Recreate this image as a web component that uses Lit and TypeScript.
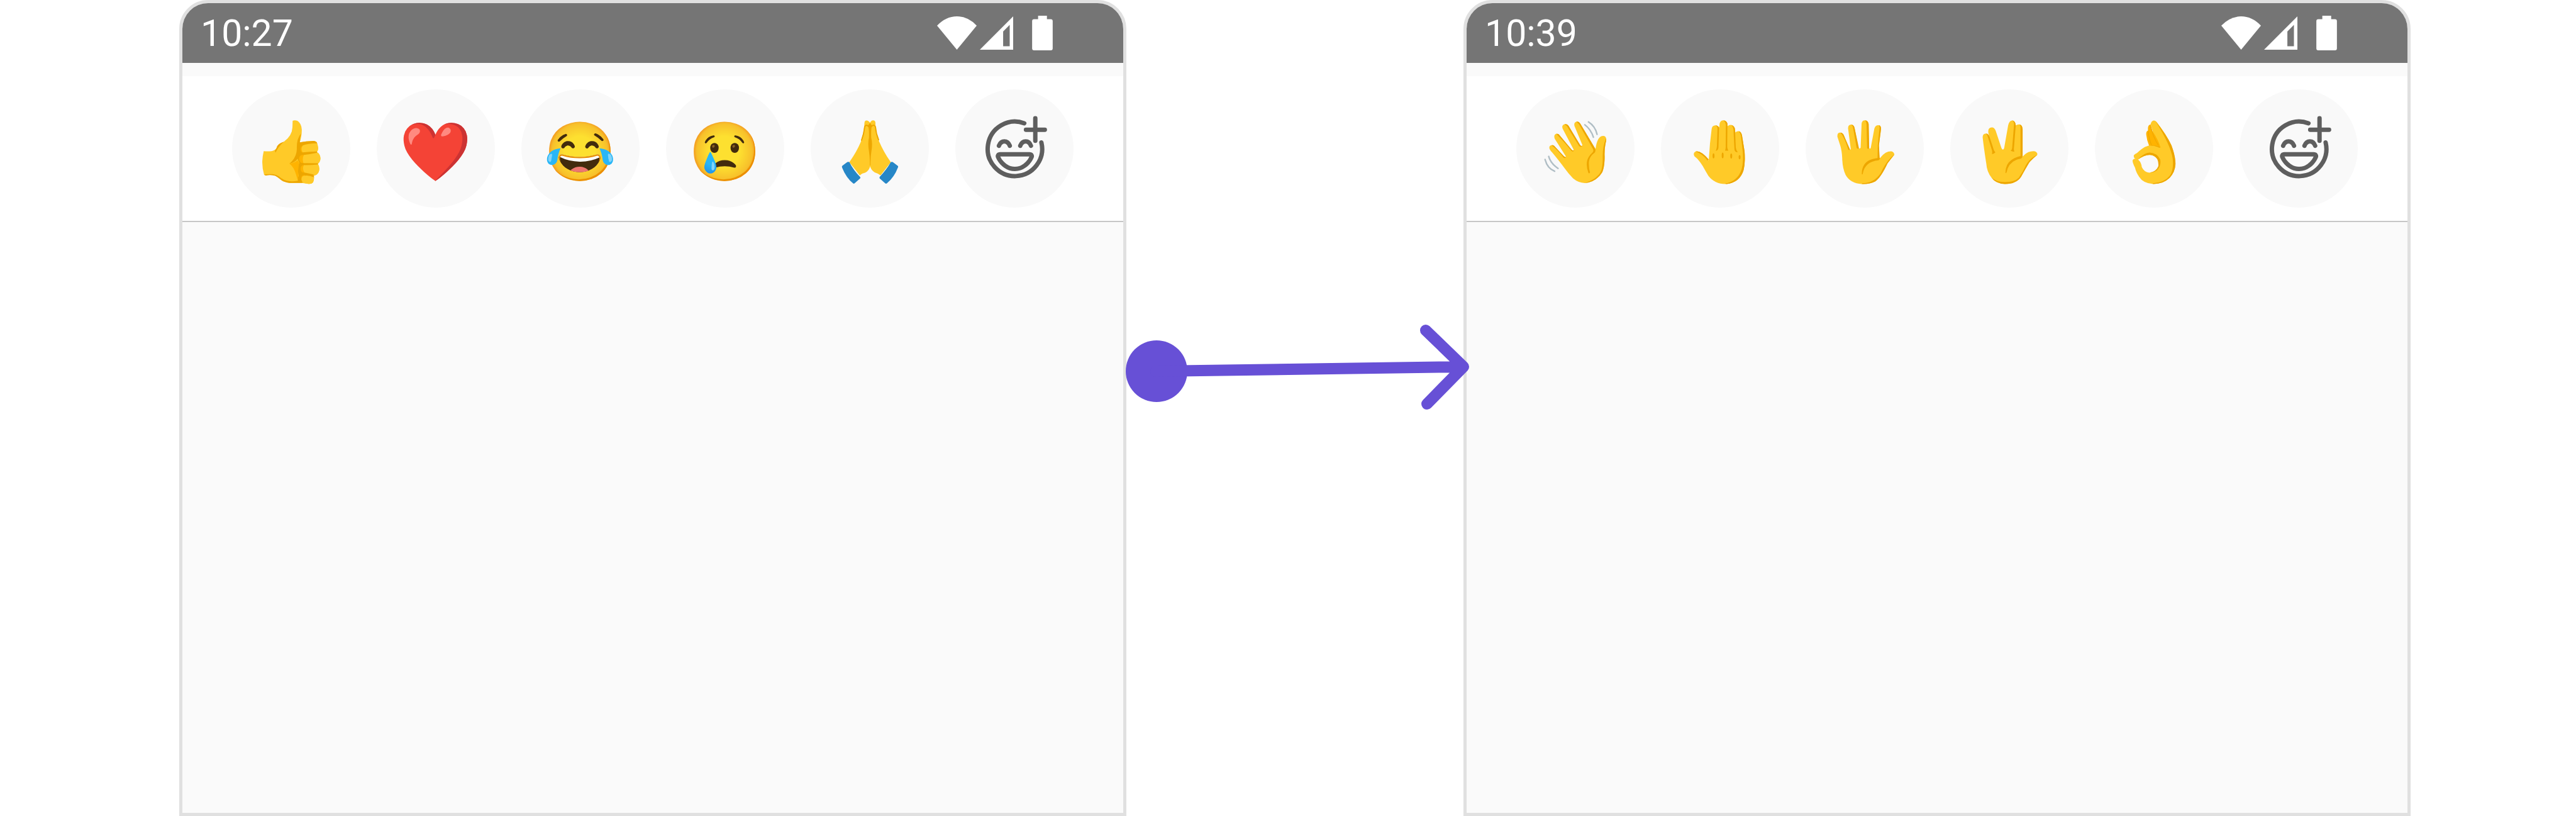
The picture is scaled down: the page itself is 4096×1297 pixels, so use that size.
import { LitElement, html, svg, css, type SVGTemplateResult } from "lit";
import { customElement, property } from "lit/decorators.js";

interface Reaction {
  label: string;
  glyph?: string;
  art?: SVGTemplateResult;
  box?: string;
}

const thumbsUp = svg`
  <path class="skin" d="M331 181Q341 175 356 181Q377 194 379 226Q380 255 369 294Q410 287 446 288Q460 291 465 322Q466 335 459 345Q476 353 477 378Q477 398 464 407Q473 420 471 438Q468 460 451 467L443 470Q446 485 438 505Q430 514 414 512Q395 510 380 507H315Q290 504 272 492Q255 477 240 469Q220 464 200 466Q185 470 181 464Q163 405 179 340Q200 342 220 340Q238 337 246 325Q252 302 285 291Q328 260 330 215Z"/>
  <path class="shade" d="M375 248Q368 275 369 294Q400 288 440 287Q457 287 460 299L459 345 464 407 441 465 443 478 384 505 380 507H315Q290 505 272 493Q255 478 240 470Q215 465 200 467Q185 471 183 463Q200 460 225 461Q245 463 258 473Q285 497 315 498Q345 500 359 496Q355 480 363 470Q358 455 360 430Q360 410 366 402Q360 390 357 380Q345 400 314 406Q352 375 353 330Q351 275 375 248ZM285 291Q248 302 246 325L238 338 241 349Q254 318 285 291Z"/>
  <path class="deep" d="M357 388Q342 402 314 406Q338 425 348 460L358 494Q356 480 362 470Q358 450 361 430Q361 412 366 402Q360 396 357 388Z"/>
  <path class="deep" d="M395 308Q375 312 373 325Q371 342 380 347L400 345ZM390 360Q366 358 365 378Q366 398 378 402L400 403ZM395 413Q375 412 373 430Q373 448 384 453L400 453ZM395 466Q377 466 376 480Q377 494 386 500L405 503Z"/>
  <path class="skin" d="M384 311Q410 299 459 299Q465 310 465 325Q465 338 457 342Q420 343 384 347Q372 330 384 311ZM390 360Q425 357 460 349Q476 356 477 378Q476 398 464 404Q425 403 388 403Q380 380 390 360ZM390 414Q430 414 464 411Q472 420 471 438Q468 460 451 466Q420 458 393 453Q380 433 390 414ZM384 472Q410 463 441 477Q446 490 438 505Q430 514 414 512Q395 510 382 502Q371 487 384 472Z"/>`;

const foldedHands = svg`
  <path class="skin" d="M356 192Q346 176 332 180Q325 184 326 200Q320 255 308 290Q285 345 247 398L302 468Q312 457 330 454Q352 442 356 420Q361 440 380 452Q398 457 411 468L465 398Q430 350 403 288Q388 255 384 200Q386 182 376 179Q362 176 356 192Z"/>
  <path class="shade" d="M356 190Q352 200 344 206Q352 220 350 270Q343 300 350 340Q355 370 355 415H358Q358 370 363 340Q370 300 362 270Q360 220 366 206Q358 200 356 190Z"/>
  <path class="crease thin" d="M311 283Q324 250 328 212Q335 196 349 212M401 281Q387 248 384 212Q375 196 362 212"/>
  <path class="cuff" d="M248 399Q241 394 232 401L210 417Q206 420 209 427Q230 480 267 510Q270 513 274 510L303 484Q308 480 303 475Q268 440 248 399ZM464 399Q470 394 477 399L501 417Q505 420 503 425Q482 480 444 510Q440 513 436 510L407 484Q403 480 407 475Q444 435 464 399Z"/>`;

const wavingHand = svg`
  <path class="skin" d="M195 330Q189 312 205 309Q216 306 224 318L268 369Q280 378 280 368L222 276Q214 255 230 249Q241 246 250 260L309 332Q320 342 321 332L264 224Q256 205 272 199Q286 195 295 208L353 308Q366 318 367 308L326 210Q320 190 336 185Q348 183 356 196L436 330Q440 295 452 275Q464 258 482 261Q494 266 492 285Q482 320 484 370Q484 420 472 450Q440 502 380 508Q345 506 318 483Q295 460 275 432Q240 385 208 347Q200 340 195 330Z"/>
  <path class="shade" d="M205 310Q216 306 224 318L270 367Q278 374 282 371Q278 380 268 374Q235 332 205 310ZM231 250Q241 246 250 260L312 334Q319 340 323 335Q320 347 309 339Q275 295 231 250ZM273 200Q286 195 295 208L356 309Q362 316 368 311Q362 322 350 314L285 207ZM336 186Q348 183 356 196L434 326Q438 340 432 348Q402 370 401 400Q400 430 407 452Q404 460 399 455Q386 425 392 390Q398 368 420 348Q428 340 423 330L350 200ZM492 272Q493 285 489 300Q482 335 484 370Q484 420 472 450Q440 502 380 508Q440 490 463 450Q475 425 474 370Q473 315 492 272Z"/>
  <path class="motion" d="M380 202Q411 225 425 267M399 187Q435 210 444 252M190 368Q200 405 239 431M171 384Q182 430 221 446"/>`;

const raisedBack = svg`
  <path class="skin" d="M1042 225Q1044 205 1062 205Q1076 206 1082 216L1084 195Q1088 178 1104 178Q1120 180 1125 195L1126 209Q1136 200 1150 204Q1164 210 1165 228L1167 242Q1175 233 1190 236Q1200 242 1203 265L1215 340Q1220 400 1210 440Q1190 505 1120 513Q1060 515 1025 470Q1010 445 995 418Q975 385 952 368Q942 350 958 342Q985 335 1025 388Q1028 385 1028 375Q1032 300 1042 225Z"/>
  <path class="shade" d="M1062 205Q1076 206 1081 218L1078 320Q1078 337 1063 339Q1069 330 1070 310L1073 225Q1074 212 1062 205ZM1104 178Q1120 180 1125 195L1124 320Q1126 333 1130 338H1113Q1117 325 1116 310L1117 200Q1115 186 1104 178ZM1146 203Q1164 208 1165 228L1169 320Q1172 340 1180 345Q1163 348 1162 330L1157 230Q1156 212 1146 203ZM1184 236Q1200 238 1203 265L1215 340Q1220 400 1210 440Q1190 505 1120 513L1112 511Q1180 500 1200 435Q1210 400 1206 345L1196 260Q1194 245 1184 236ZM958 342Q985 335 1027 384L1020 389Q995 355 958 342Z"/>
  <g class="shade"><ellipse cx="1052" cy="365" rx="5" ry="13"/><ellipse cx="1100" cy="363" rx="5" ry="15"/><ellipse cx="1145" cy="366" rx="5" ry="13"/><ellipse cx="1189" cy="372" rx="5" ry="11"/></g>`;

const splayedHand = svg`
  <path class="skin" d="M202 265Q200 243 216 243Q230 243 236 258L264 330Q272 336 272 328L258 222Q257 202 274 201Q288 202 292 218L312 322Q318 330 324 322L329 195Q331 178 347 178Q364 180 366 198L368 322Q372 332 377 324L396 222Q402 203 418 204Q432 206 431 225L420 310 422 375Q427 378 430 372Q455 340 485 341Q502 345 501 360Q480 385 465 405Q430 480 400 500Q370 515 330 513Q270 510 245 465Q228 430 227 375Q225 340 218 315Z"/>
  <path class="shade" d="M218 243Q230 243 236 258L268 331Q264 337 259 332Q240 270 218 243ZM275 201Q288 202 292 218L315 325Q308 331 303 324L285 222Q283 208 275 201ZM347 178Q364 180 366 198L369 325Q364 332 358 325L355 198Q354 185 347 178ZM420 204Q432 206 431 225L420 310 424 375Q427 385 418 388Q345 395 335 460Q332 465 330 460Q330 385 413 377L414 310 423 222Q425 211 420 204ZM501 358Q480 385 465 405Q430 480 400 500Q370 515 330 513L333 509Q395 508 430 455Q460 390 501 358Z"/>`;

const vulcanSalute = svg`
  <path class="skin" d="M963 268Q963 248 980 248Q990 248 996 256Q990 240 994 226Q1000 215 1014 216Q1026 218 1032 235L1062 325Q1070 340 1076 325L1097 205Q1103 178 1120 179Q1136 182 1137 205Q1145 199 1155 200Q1172 203 1173 225V368Q1177 368 1180 362Q1205 338 1237 341Q1255 348 1249 362Q1225 380 1208 400Q1190 430 1165 475Q1140 513 1080 513Q1030 510 1010 480Q985 450 982 405Q970 330 963 268Z"/>
  <path class="shade" d="M980 248Q994 250 1000 268L1022 335Q1025 342 1030 346Q1022 356 1012 356Q1015 345 1011 333L991 268Q988 255 980 248ZM1118 178Q1136 182 1137 205L1127 330Q1127 338 1130 342Q1120 344 1110 338Q1117 335 1118 325L1128 200Q1128 185 1118 178ZM1156 200Q1172 203 1173 225V366Q1173 376 1165 379Q1100 390 1088 453Q1085 460 1083 453Q1082 385 1162 366V220Q1163 207 1156 200ZM1009 478Q1035 503 1080 503Q1130 503 1153 480Q1175 450 1190 415Q1208 380 1249 360Q1225 380 1208 400Q1190 430 1165 475Q1140 513 1080 513Q1030 510 1009 478Z"/>`;

const okHand = svg`
  <path class="skin" fill-rule="evenodd" d="M309 200Q314 178 326 179Q334 180 340 190Q385 255 408 310Q428 370 427 410Q425 450 400 480Q370 513 322 513Q275 510 255 475Q240 450 236 428Q225 405 224 390Q228 378 240 381Q228 378 230 362Q236 354 245 350Q270 325 283 318L302 311Q340 290 309 200ZM304 359Q280 362 250 384Q266 400 268 425Q280 453 304 454Q330 452 345 430Q350 405 344 385Q330 362 304 359Z"/>
  <path class="deep" d="M309 200Q298 203 297 218V232Q287 236 289 255Q292 285 302 311Q330 308 357 322Q345 280 318 235Z"/>
  <path class="shade" d="M302 311Q330 306 355 319Q352 325 344 319Q325 311 302 311ZM250 384Q280 348 305 348Q340 350 355 385Q360 420 340 440Q325 453 304 454Q335 450 346 420Q350 375 318 362Q285 355 250 384ZM332 182Q385 255 408 310Q428 370 427 410Q425 450 400 480Q370 513 322 513L318 510Q375 505 400 470Q420 440 414 380Q405 310 332 182Z"/>
  <path class="crease hair" d="M298 235Q301 275 313 307M309 207Q320 265 346 309"/>`;

const EVERYDAY: Reaction[] = [
  { label: "Thumbs up", art: thumbsUp, box: "125 128 400 400" },
  { label: "Red heart", glyph: "❤️" },
  { label: "Tears of joy", glyph: "😂" },
  { label: "Crying face", glyph: "😢" },
  { label: "Folded hands", art: foldedHands, box: "156 128 400 400" },
];

const HANDS: Reaction[] = [
  { label: "Waving hand", art: wavingHand, box: "132 128 400 400" },
  { label: "Raised back of hand", art: raisedBack, box: "888 128 400 400" },
  { label: "Hand with fingers splayed", art: splayedHand, box: "147 128 400 400" },
  { label: "Vulcan salute", art: vulcanSalute, box: "905 128 400 400" },
  { label: "OK hand", art: okHand, box: "147 128 360 400" },
];

@customElement("phone-screen")
export class PhoneScreen extends LitElement {
  @property() time = "";
  @property({ attribute: false }) reactions: Reaction[] = [];

  static styles = css`
    :host { display: block; min-width: 0; }
    .screen {
      box-sizing: border-box; height: 100%;
      display: flex; flex-direction: column;
      border: 5px solid #e0e0e0; border-radius: 46px 46px 0 0;
      background: #fafafa; overflow: hidden;
    }
    .status {
      display: flex; align-items: center; justify-content: space-between;
      height: 95px; padding: 0 112px 0 29px;
      background: #757575; color: #fff;
      font: 400 59px/70px Roboto, sans-serif;
    }
    .indicators { display: flex; align-items: center; }
    .wifi { width: 63px; height: 53px; margin-right: 5px; }
    .signal { width: 53px; height: 53px; margin-right: 30px; }
    .battery { width: 33px; height: 55px; }
    .reactions {
      display: flex; justify-content: center; gap: 42px;
      margin-top: 21px; padding: 21px 0;
      background: #fff; border-bottom: 2px solid #c6c6c6;
    }
    .reaction {
      display: grid; place-items: center;
      width: 188px; height: 188px; padding: 0;
      border: 0; border-radius: 50%; background: #f9f9f9;
      font: 92px/108px "Noto Color Emoji", sans-serif;
    }
    .glyph { padding-top: 12px; }
    .art { width: 121px; height: 121px; }
    .add { width: 109px; height: 109px; }
    .skin { fill: #ffca28; }
    .shade { fill: #eda600; }
    .deep { fill: #ffb300; }
    .cuff { fill: #2787c7; }
    .crease { fill: none; stroke: #eda600; stroke-linecap: round; }
    .thin { stroke-width: 6; }
    .hair { stroke-width: 3; }
    .motion { fill: none; stroke: #b0bec5; stroke-width: 8; stroke-linecap: round; }
  `;

  private face(r: Reaction) {
    return r.art
      ? html`<svg class="art" viewBox=${r.box ?? ""} preserveAspectRatio="none" aria-hidden="true">${r.art}</svg>`
      : html`<span class="glyph">${r.glyph}</span>`;
  }

  render() {
    return html`<section class="screen">
      <header class="status">
        <time>${this.time}</time>
        <div class="indicators">
          <svg class="wifi" viewBox="0 0 206 173" fill="#fff" aria-hidden="true"><path d="M0 48Q46 0 103 0T206 48L103 173Z"/></svg>
          <svg class="signal" viewBox="0 0 173 173" fill="#fff" fill-rule="evenodd" aria-hidden="true"><path d="M173 0V173H0ZM155 44 121 78V155H155Z"/></svg>
          <svg class="battery" viewBox="0 0 107 180" fill="#fff" aria-hidden="true"><path d="M31 0H77V18H97Q107 18 107 28V170Q107 180 97 180H10Q0 180 0 170V28Q0 18 10 18H31Z"/></svg>
        </div>
      </header>
      <div class="reactions">
        ${this.reactions.map((r) => html`<button class="reaction" aria-label=${r.label}>${this.face(r)}</button>`)}
        <button class="reaction" aria-label="More reactions">
          <svg class="add" viewBox="394 598 360 360" fill="none" stroke="#5e5e5e" stroke-width="23" stroke-linecap="round" stroke-linejoin="round" aria-hidden="true">
            <path d="M624 644A143 143 0 1 0 714 745M682 618V736M633 678H732M491 762c12-30 45-30 57 0M603 762c12-30 45-30 56 0"/>
            <path d="M498 807H651c11 0 15 7 11 15-16 36-50 62-87 62s-72-26-88-62c-4-8 0-15 11-15z"/>
          </svg>
        </button>
      </div>
    </section>`;
  }
}

@customElement("app-root")
export class AppRoot extends LitElement {
  static styles = css`
    :host { display: block; background: #fff; }
    .board {
      display: grid; min-height: 100vh;
      grid-template-columns: 285fr 1506fr 536fr 1506fr 263fr;
    }
    .first { grid-column: 2; }
    .link { grid-column: 3; z-index: 1; padding-top: 510px; }
    .arrow { display: block; width: 100%; overflow: visible; }
    .second { grid-column: 4; }
  `;

  render() {
    return html`<main class="board">
      <phone-screen class="first" time="10:27" .reactions=${EVERYDAY}></phone-screen>
      <div class="link">
        <svg class="arrow" viewBox="0 0 536 146" fill="none" stroke="#6750d6" stroke-width="18" stroke-linecap="round" stroke-linejoin="round" aria-hidden="true">
          <circle cx="48" cy="80" r="49" fill="#6750d6" stroke="none"/>
          <path d="M47 80 536 73M476 15 536 73 478 132"/>
        </svg>
      </div>
      <phone-screen class="second" time="10:39" .reactions=${HANDS}></phone-screen>
    </main>`;
  }
}
